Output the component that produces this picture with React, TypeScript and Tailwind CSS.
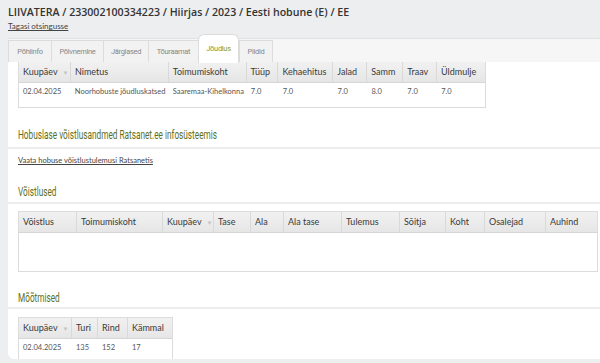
import React from 'react';

const tabs = ['Põhiinfo', 'Põlvnemine', 'Järglased', 'Tõuraamat', 'Jõudlus', 'Pildid'];
const tabWidths = ['w-[43px]', 'w-[52px]', 'w-[45px]', 'w-[50px]', 'w-[41px]', 'w-[34px]'];

type Col = { label: string; w: string; sort?: boolean };

const perfCols: Col[] = [
  { label: 'Kuupäev', w: 'w-[52px]', sort: true },
  { label: 'Nimetus', w: 'w-[98px]' },
  { label: 'Toimumiskoht', w: 'w-[78px]' },
  { label: 'Tüüp', w: 'w-[32px]' },
  { label: 'Kehaehitus', w: 'w-[55px]' },
  { label: 'Jalad', w: 'w-[34px]' },
  { label: 'Samm', w: 'w-[36px]' },
  { label: 'Traav', w: 'w-[34px]' },
  { label: 'Üldmulje', w: 'w-[48px]' },
];
const perfRow = ['02.04.2025', 'Noorhobuste jõudluskatsed', 'Saaremaa-Kihelkonna', '7.0', '7.0', '7.0', '8.0', '7.0', '7.0'];

const compCols: Col[] = [
  { label: 'Võistlus', w: 'w-[58px]' },
  { label: 'Toimumiskoht', w: 'w-[86px]' },
  { label: 'Kuupäev', w: 'w-[51px]', sort: true },
  { label: 'Tase', w: 'w-[37px]' },
  { label: 'Ala', w: 'w-[33px]' },
  { label: 'Ala tase', w: 'w-[58px]' },
  { label: 'Tulemus', w: 'w-[58px]' },
  { label: 'Sõitja', w: 'w-[46px]' },
  { label: 'Koht', w: 'w-[39px]' },
  { label: 'Osalejad', w: 'w-[61px]' },
  { label: 'Auhind', w: 'flex-1' },
];

const measCols: Col[] = [
  { label: 'Kuupäev', w: 'w-[53px]', sort: true },
  { label: 'Turi', w: 'w-[26px]' },
  { label: 'Rind', w: 'w-[30px]' },
  { label: 'Kämmal', w: 'w-[44px]' },
];
const measRow = ['02.04.2025', '135', '152', '17'];

function HeaderRow({ cols }: { cols: Col[] }) {
  return (
    <div className="flex h-[21px] bg-gradient-to-b from-[#f1f1f1] to-[#e6e6e6] border-b border-[#d6d6d6]">
      {cols.map((c, i) => (
        <div
          key={c.label}
          className={`${c.w} flex items-center px-[4px] text-[9px] text-[#3a3a3a] ${i < cols.length - 1 ? 'border-r border-[#d9d9d9]' : ''}`}
        >
          {c.label}
          {c.sort && <span className="ml-[5px] text-[6px] text-[#c4c4c4]">▼</span>}
        </div>
      ))}
    </div>
  );
}

function DataRow({ cols, values }: { cols: Col[]; values: string[] }) {
  return (
    <div className="flex h-[18px]">
      {cols.map((c, i) => (
        <div key={c.label} className={`${c.w} flex items-center px-[4px] text-[7.5px] text-[#555] whitespace-nowrap`}>
          {values[i]}
        </div>
      ))}
    </div>
  );
}

function Heading({ children, className }: { children: React.ReactNode; className: string }) {
  return (
    <div className={`${className} flex items-end pl-[10px] border-b-2 border-[#ececec]`}>
      <span className="inline-block origin-left scale-x-[0.61] whitespace-nowrap font-['Roboto',sans-serif] text-[13.5px] leading-[14px] text-[#5e6f1c]">
        {children}
      </span>
    </div>
  );
}

export default function App() {
  return (
    <div className="w-[600px] h-[363px] overflow-hidden bg-[#eceeef] font-['Lato',sans-serif]">
      <div className="px-2 pt-[4px] h-[38px]">
        <div className="font-['Open_Sans',sans-serif] font-semibold text-[10.6px] leading-[16px] text-[#333] whitespace-nowrap">
          LIIVATERA / 233002100334223 / Hiirjas / 2023 / Eesti hobune (E) / EE
        </div>
        <a className="block text-[8px] leading-[12px] text-[#444] underline">Tagasi otsingusse</a>
      </div>

      <div className="ml-2">
        {/* tabs */}
        <div className="h-[24px] bg-[#f6f6f6] border-t border-[#e2e2e2] flex items-end">
          {tabs.map((t, i) => {
            const active = t === 'Jõudlus';
            return (
              <div
                key={t}
                className={`${tabWidths[i]} flex items-center justify-center font-['Roboto',sans-serif] text-[7.5px] tracking-[-0.3px] ${
                  active
                    ? 'h-[29px] -mb-px bg-white rounded-t-[6px] border border-b-0 border-[#dcdcdc] text-[#8a9a2c] relative z-10'
                    : 'h-[22px] bg-[#f2f2f2] border-l border-t border-[#dcdcdc] text-[#888]'
                } ${i === tabs.length - 1 ? 'border-r' : ''}`}
              >
                {t}
              </div>
            );
          })}
        </div>

        {/* panel */}
        <div className="h-[297px] bg-white rounded-bl-[6px] overflow-hidden">
          <div className="ml-[10px] w-[468px] h-[46px] border border-t-0 border-[#dcdcdc]">
            <HeaderRow cols={perfCols} />
            <DataRow cols={perfCols} values={perfRow} />
          </div>

          <Heading className="h-[41px] pb-[6px]">Hobuslase võistlusandmed Ratsanet.ee infosüsteemis</Heading>

          <div className="pl-[10px] pt-[7px] h-[25px]">
            <a className="block text-[7.5px] leading-[10px] text-[#444] underline">Vaata hobuse võistlustulemusi Ratsanetis</a>
          </div>

          <Heading className="h-[30px] pb-[4px]">Võistlused</Heading>

          <div className="ml-[10px] mr-[2px] mt-[7px] h-[61px] border border-[#dcdcdc]">
            <HeaderRow cols={compCols} />
          </div>

          <Heading className="h-[37px] pb-[3px]">Mõõtmised</Heading>

          <div className="ml-[10px] mt-[8px] w-[155px] h-[60px] border border-[#dcdcdc]">
            <HeaderRow cols={measCols} />
            <DataRow cols={measCols} values={measRow} />
          </div>
        </div>
      </div>
    </div>
  );
}
